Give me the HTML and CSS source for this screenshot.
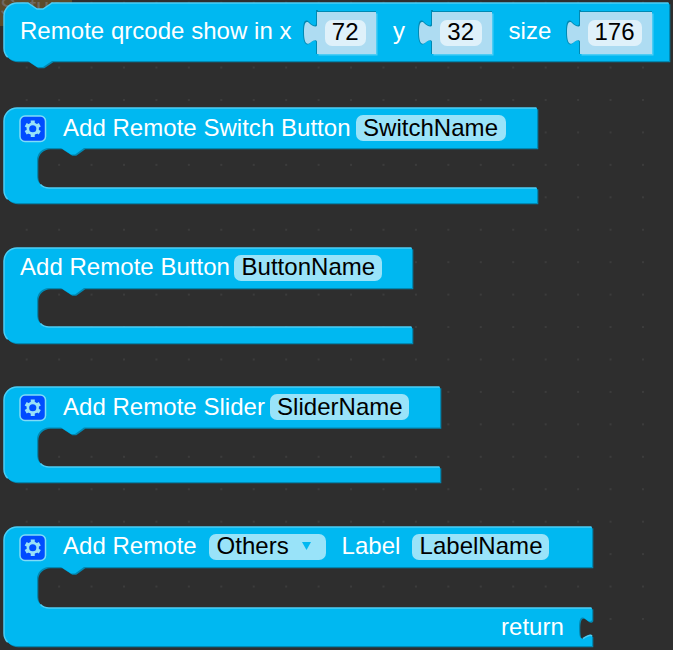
FILE: index.html
```html
<!DOCTYPE html>
<html lang="en">
<head>
<meta charset="utf-8">
<title>Remote blocks</title>
<link rel="stylesheet" href="styles.css">
</head>
<body>
<svg class="defs" width="0" height="0" aria-hidden="true">
  <defs>
    <symbol id="gear" viewBox="0 0 28 28">
      <rect class="gear-box" x="1" y="1" width="25.5" height="25.5" rx="5"/>
      <path class="gear-teeth" d="M13.75 5.6V21.9M6.7 9.7l14.1 8.1M6.7 17.8l14.1-8.1"/>
      <circle class="gear-body" cx="13.75" cy="13.75" r="6.2"/>
      <circle class="gear-hole" cx="13.75" cy="13.75" r="3.6"/>
    </symbol>
    <symbol id="plug" viewBox="0 0 15 45">
      <path class="plug-dark" d="M15 0H13V14C12 17 9 15 5 11C1 9 0 14 0 22C0 31 2 36 6 34C9 31 12 29 13 32V44H15Z"/>
      <path class="plug-fill" d="M15 1H14V15.500C13 18 9 16 5.500 12.500C2 10.500 1 15 1 22.500C1 31 3 35 6 33.500C9 31 13 28.500 14 31.500V44H15Z"/>
    </symbol>
  </defs>
</svg>
<main class="workspace">
  <div class="ghost">Setup</div>

  <section class="block statement">
    <svg class="shape" width="673" height="70">
      <path class="dark" transform="translate(1.300 1.300)" d="M4 16A13 13 0 0 1 17 3H28L37 9H43L52 3H669V61H52L43 67H37L28 61H17A13 13 0 0 1 4 48Z"/>
      <path class="fill" d="M4 16A13 13 0 0 1 17 3H28L37 9H43L52 3H669V61H52L43 67H37L28 61H17A13 13 0 0 1 4 48Z"/>
      <path class="light" d="M7.700 57.300A13 13 0 0 1 4 48V16A13 13 0 0 1 17 3H28L37 9H43L52 3H668.500"/>
    </svg>
    <div class="row">
      <span class="label l-remote">Remote qrcode show in x</span>
      <span class="value"><svg class="plug"><use href="#plug"/></svg><span class="socket"><span class="num">72</span></span></span>
      <span class="label l-y">y</span>
      <span class="value"><svg class="plug"><use href="#plug"/></svg><span class="socket"><span class="num">32</span></span></span>
      <span class="label l-size">size</span>
      <span class="value wide"><svg class="plug"><use href="#plug"/></svg><span class="socket"><span class="num">176</span></span></span>
    </div>
  </section>

  <section class="block switch">
    <svg class="shape" width="673" height="100">
      <path class="dark" transform="translate(1.300 1.300)" d="M4 14A13 13 0 0 1 17 1H537V41H84L75 47.500H71L61 41H49A12 12 0 0 0 37 53V69A12 12 0 0 0 49 81H537V96H17A13 13 0 0 1 4 83Z"/>
      <path class="fill" d="M4 14A13 13 0 0 1 17 1H537V41H84L75 47.500H71L61 41H49A12 12 0 0 0 37 53V69A12 12 0 0 0 49 81H537V96H17A13 13 0 0 1 4 83Z"/>
      <path class="light" d="M7.700 92.300A13 13 0 0 1 4 83V14A13 13 0 0 1 17 1H536.500M40.500 77.500A12 12 0 0 0 49 81H536.500"/>
    </svg>
    <div class="row">
      <svg class="gear"><use href="#gear"/></svg>
      <span class="label">Add Remote Switch Button</span>
      <span class="field">SwitchName</span>
    </div>
  </section>

  <section class="block button">
    <svg class="shape" width="673" height="100">
      <path class="dark" transform="translate(1.300 1.300)" d="M4 14A13 13 0 0 1 17 1H412V41H84L75 47.500H71L61 41H49A12 12 0 0 0 37 53V68A12 12 0 0 0 49 80H412V96H17A13 13 0 0 1 4 83Z"/>
      <path class="fill" d="M4 14A13 13 0 0 1 17 1H412V41H84L75 47.500H71L61 41H49A12 12 0 0 0 37 53V68A12 12 0 0 0 49 80H412V96H17A13 13 0 0 1 4 83Z"/>
      <path class="light" d="M7.700 92.300A13 13 0 0 1 4 83V14A13 13 0 0 1 17 1H411.500M40.500 76.500A12 12 0 0 0 49 80H411.500"/>
    </svg>
    <div class="row">
      <span class="label">Add Remote Button</span>
      <span class="field">ButtonName</span>
    </div>
  </section>

  <section class="block slider">
    <svg class="shape" width="673" height="100">
      <path class="dark" transform="translate(1.300 1.300)" d="M4 14A13 13 0 0 1 17 1H440V41.500H84L75 48H71L61 41.500H49A12 12 0 0 0 37 53.500V69A12 12 0 0 0 49 81H440V96H17A13 13 0 0 1 4 83Z"/>
      <path class="fill" d="M4 14A13 13 0 0 1 17 1H440V41.500H84L75 48H71L61 41.500H49A12 12 0 0 0 37 53.500V69A12 12 0 0 0 49 81H440V96H17A13 13 0 0 1 4 83Z"/>
      <path class="light" d="M7.700 92.300A13 13 0 0 1 4 83V14A13 13 0 0 1 17 1H439.500M40.500 77.500A12 12 0 0 0 49 81H439.500"/>
    </svg>
    <div class="row">
      <svg class="gear"><use href="#gear"/></svg>
      <span class="label">Add Remote Slider</span>
      <span class="field">SliderName</span>
    </div>
  </section>

  <section class="block others">
    <svg class="shape" width="673" height="124">
      <path class="dark" transform="translate(1.300 1.300)" d="M4 14A13 13 0 0 1 17 1H592V41H84L75 47.500H71L61 41H49A12 12 0 0 0 37 53V70A12 12 0 0 0 49 82H592V94C590 97 588 95 584 92C580 90 579 95 579 102C579 110 580 114 584 112C588 110 590 107 592 110V120H17A13 13 0 0 1 4 107Z"/>
      <path class="fill" d="M4 14A13 13 0 0 1 17 1H592V41H84L75 47.500H71L61 41H49A12 12 0 0 0 37 53V70A12 12 0 0 0 49 82H592V94C590 97 588 95 584 92C580 90 579 95 579 102C579 110 580 114 584 112C588 110 590 107 592 110V120H17A13 13 0 0 1 4 107Z"/>
      <path class="light" d="M7.700 116.300A13 13 0 0 1 4 107V14A13 13 0 0 1 17 1H591.500M40.500 78.500A12 12 0 0 0 49 82H591.500M583 112.500C587 110.500 590 107.500 592 110"/>
    </svg>
    <div class="row">
      <svg class="gear"><use href="#gear"/></svg>
      <span class="label">Add Remote</span>
      <span class="field pick">Others<svg class="arrow" viewBox="0 0 9 8"><path d="M0 0H9L4.500 8Z"/></svg></span>
      <span class="label l-label">Label</span>
      <span class="field">LabelName</span>
    </div>
    <div class="return"><span class="label">return</span></div>
  </section>
</main>
</body>
</html>
```

FILE: styles.css
```css
* { box-sizing: border-box; }

body {
  margin: 0;
  background: #2e2e2e;
}

.defs { position: absolute; }

.workspace {
  position: relative;
  width: 673px;
  height: 650px;
  overflow: hidden;
  background-color: #2e2e2e;
  background-image: radial-gradient(circle at 1px 1px, #3c3c3c 0.9px, transparent 1.3px);
  background-size: 32.44px 32.44px;
  background-position: 25.7px 1.700px;
  font: 24px/24px "Liberation Sans", Arial, sans-serif;
  letter-spacing: 0.03px;
  color: #fff;
  white-space: nowrap;
  display: flow-root;
}

/* Corner of a dimmed block lying underneath the first one */
.ghost {
  position: absolute;
  left: 0;
  top: 0;
  width: 72px;
  height: 26px;
  background: #5c4a2b;
  color: #6f6860;
  line-height: 14px;
}

.block { position: relative; }
.statement { height: 107px; }
.switch { height: 140px; }
.button { height: 139px; }
.slider { height: 140px; }
.others { height: 124px; }

.shape {
  position: absolute;
  left: 0;
  top: 0;
  overflow: visible;
}
.fill { fill: #00b8f1; }
.dark { fill: #0089b3; }
.light { fill: none; stroke: #4ccdf5; stroke-width: 1.5; }

.row {
  position: relative;
  display: flex;
  align-items: flex-start;
  padding: 8px 0 0 20px;
}

.gear {
  width: 28px;
  height: 28px;
  margin: 0 16px 0 -1px;
}
.gear-box { fill: #004cff; stroke: #80dcf8; stroke-width: 1.5; }
.gear-teeth { fill: none; stroke: #99e2f8; stroke-width: 4; }
.gear-body { fill: #99e2f8; }
.gear-hole { fill: #004cff; }

.field {
  height: 26px;
  padding-left: 7.500px;
  border-radius: 7px;
  background: #99e3f9;
  color: #000;
}
.switch .row,
.slider .row { line-height: 26px; }
.others .row .gear { margin-top: -0.500px; }

.switch .label { width: 292.500px; }
.switch .field { width: 150.500px; }
.button .label { width: 214px; }
.button .field { width: 147.500px; }
.slider .label { width: 206.500px; }
.slider .field { width: 139.500px; }
.others .label { width: 146px; }
.others .field { width: 136.500px; }
.others .row .l-label { width: 70.500px; }
.others .pick {
  display: flex;
  width: 117px;
  margin-right: 15.500px;
}
.arrow {
  width: 9px;
  height: 8px;
  margin: 8px 0 0 13.500px;
  fill: #00b8f1;
}

.return {
  position: relative;
  padding: 53px 0 0 501px;
}

.statement .row { padding-top: 11px; }
.statement .label { margin-top: 8px; }
.l-remote { width: 282.500px; }
.l-y { width: 25px; margin-left: 16px; }
.l-size { width: 57px; margin-left: 16px; }

.value {
  display: flex;
  width: 74.500px;
  height: 45px;
}
.value.wide { width: 87px; }
.plug {
  flex: none;
  width: 15px;
  height: 45px;
  margin: -1px -1px 0 0;
}
.plug-dark { fill: #0089b3; }
.plug-fill { fill: #aedcf2; }

.socket {
  flex: 1;
  height: 42px;
  margin: 1px 1px 0 0;
  padding: 8px 10px 0 8px;
  background: #aedcf2;
  box-shadow: 1.500px 1.500px 0 #4ccdf5, 0 -1px 0 #0089b3;
}
.num {
  display: block;
  height: 26px;
  border-radius: 7px;
  background: #dff1fa;
  color: #000;
  text-align: center;
}
```
